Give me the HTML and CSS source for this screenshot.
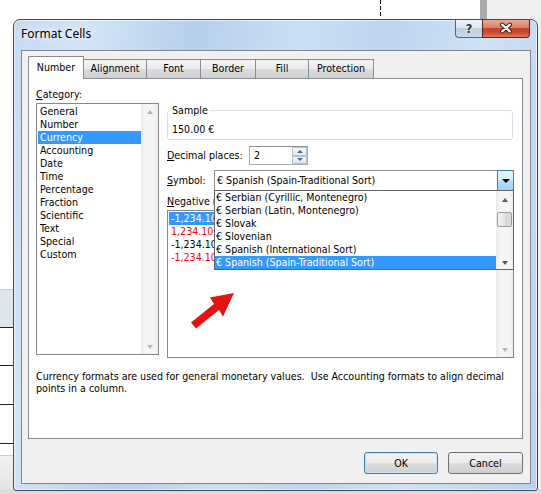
FILE: index.html
```
<!DOCTYPE html>
<html>
<head>
<meta charset="utf-8">
<title>Format Cells</title>
<link rel="stylesheet" href="styles.css">
</head>
<body>
<div class="sheet-left">
  <div class="s-white"></div>
  <div class="s-band"></div>
  <div class="s-row s-row-a"></div>
  <div class="s-row s-row-b"></div>
  <div class="s-row s-row-b"></div>
  <div class="s-gap"></div>
  <div class="s-foot"></div>
</div>
<div class="top-dash"></div>
<div class="top-bar"></div>
<div class="top-gray"></div>
<div class="right-strip"></div>
<div class="bottom-strip"></div>

<div class="win">
  <div class="titlebar">
    <span class="title">Format Cells</span>
    <div class="caps">
      <div class="cap cap-help"><span>?</span></div>
      <div class="cap cap-close">
        <svg width="47" height="17" viewBox="0 0 47 17">
          <path d="M19.5 4.5 L27.5 11.5 M27.5 4.5 L19.5 11.5" stroke="#4a1a10" stroke-width="4.2" stroke-linecap="round" fill="none"/>
          <path d="M19.5 4.5 L27.5 11.5 M27.5 4.5 L19.5 11.5" stroke="#ffffff" stroke-width="2.2" stroke-linecap="round" fill="none"/>
        </svg>
      </div>
    </div>
  </div>
  <div class="client">
    <div class="tabs">
      <div class="tab tab-sel w-number">Number</div>
      <div class="tab w-align">Alignment</div>
      <div class="tab w-font">Font</div>
      <div class="tab w-border">Border</div>
      <div class="tab w-fill">Fill</div>
      <div class="tab w-prot">Protection</div>
    </div>
    <div class="panel">
      <div class="col-left">
        <div class="lbl"><u>C</u>ategory:</div>
        <div class="listbox cat">
          <div class="items">
            <div class="item">General</div>
            <div class="item">Number</div>
            <div class="item sel">Currency</div>
            <div class="item">Accounting</div>
            <div class="item">Date</div>
            <div class="item">Time</div>
            <div class="item">Percentage</div>
            <div class="item">Fraction</div>
            <div class="item">Scientific</div>
            <div class="item">Text</div>
            <div class="item">Special</div>
            <div class="item">Custom</div>
          </div>
          <div class="vscroll"><span class="arr up light"></span><span class="arr down light"></span></div>
        </div>
      </div>
      <div class="col-right">
        <div class="group">
          <span class="group-lbl">Sample</span>
          <div class="sample">150.00 €</div>
        </div>
        <div class="row dec">
          <span class="lbl w-dec"><u>D</u>ecimal places:</span>
          <div class="spin">
            <span class="spin-val">2</span>
            <div class="spin-btns">
              <div class="sb"><span class="tri tri-up"></span></div>
              <div class="sb"><span class="tri tri-down"></span></div>
            </div>
          </div>
        </div>
        <div class="row sym">
          <span class="lbl w-sym"><u>S</u>ymbol:</span>
          <div class="combo">
            <span class="combo-val">€ Spanish (Spain-Traditional Sort)</span>
            <div class="combo-btn"><span class="tri-black"></span></div>
          </div>
        </div>
        <div class="lbl neg-lbl"><u>N</u>egative numbers:</div>
        <div class="listbox neg">
          <div class="items">
            <div class="item sel">-1,234.10 €</div>
            <div class="item red">1,234.10 €</div>
            <div class="item">-1,234.10 €</div>
            <div class="item red">-1,234.10 €</div>
          </div>
          <div class="vscroll"><span class="arr up light"></span><span class="arr down light"></span></div>
        </div>
      </div>
      <p class="desc">Currency formats are used for general monetary values.&nbsp; Use Accounting formats to align decimal<br>points in a column.</p>

      <div class="dropdown">
        <div class="items">
          <div class="item">€ Serbian (Cyrillic, Montenegro)</div>
          <div class="item">€ Serbian (Latin, Montenegro)</div>
          <div class="item">€ Slovak</div>
          <div class="item">€ Slovenian</div>
          <div class="item">€ Spanish (International Sort)</div>
          <div class="item sel">€ Spanish (Spain-Traditional Sort)</div>
        </div>
        <div class="vscroll dd-scroll">
          <span class="arr up"></span>
          <span class="thumb"></span>
          <span class="spacer"></span>
          <span class="arr down"></span>
        </div>
      </div>

      <svg class="arrow" width="60" height="50" viewBox="0 0 60 50">
        <polygon points="11,37.4 34,18.9 30,12.6 54,8 43,31.4 39,25.1 16,43.6" fill="#e41212"/>
      </svg>
    </div>
    <div class="btnrow">
      <button class="btn btn-ok">OK</button>
      <button class="btn btn-cancel">Cancel</button>
    </div>
  </div>
</div>
</body>
</html>
```

FILE: styles.css
```
* { box-sizing: border-box; }
html, body { margin: 0; padding: 0; }
body {
  width: 541px;
  height: 494px;
  overflow: hidden;
  position: relative;
  background: #ffffff;
  font-family: "DejaVu Sans Condensed", "DejaVu Sans", sans-serif;
  font-size: 10.6px;
  color: #000;
}
u { text-decoration: underline; text-underline-offset: 1px; }

/* background: spreadsheet behind the dialog */
.sheet-left {
  position: absolute;
  left: 0; top: 0;
  width: 14px; height: 494px;
  display: flex; flex-direction: column;
}
.s-white { height: 289px; background: #fff; }
.s-band { height: 39px; background: #dde5ed; border-top: 1px solid #c5ced8; border-bottom: 1px solid #202020; }
.s-row { border-bottom: 1px solid #202020; }
.s-row-a { height: 38px; }
.s-row-b { height: 39px; }
.s-gap { height: 11px; }
.s-foot { flex: 1; background: linear-gradient(#f2f2f2, #e2e2e2); border-top: 1px solid #cfcfcf; }
.top-dash {
  position: absolute; left: 380px; top: 0;
  width: 1px; height: 18px;
  background: repeating-linear-gradient(to bottom, #000 0 4px, transparent 4px 6px);
}
.top-bar { position: absolute; left: 480px; top: 0; width: 7px; height: 20px; background: #a8a8a8; }
.top-gray { position: absolute; left: 487px; top: 0; width: 54px; height: 20px; background: #f0f0f0; }
.right-strip { position: absolute; left: 536px; top: 18px; width: 5px; height: 476px; background: #eeeeee; }
.bottom-strip { position: absolute; left: 0; top: 489px; width: 541px; height: 5px; background: #dcdcdc; }

/* window */
.win {
  position: absolute;
  left: 13px; top: 19px;
  width: 525px; height: 472px;
  border: 1px solid #3e4c5e;
  border-radius: 7px 7px 3px 3px;
  background: linear-gradient(100deg, #c5daf2 0%, #d3e4f6 12%, #b7cfeb 30%, #cbdff4 48%, #bed5ef 62%, #cee1f5 78%, #bad2ee 100%);
  box-shadow: inset 0 0 0 1px rgba(255,255,255,0.55);
  padding: 0 6px 6px 7px;
}
.titlebar { height: 30px; display: flex; align-items: flex-start; }
.title {
  margin-top: 6px;
  font-family: "Noto Sans", "DejaVu Sans", sans-serif;
  font-size: 12px;
  line-height: 16px;
  color: #000;
  text-shadow: 0 0 6px #fff, 0 0 10px #fff;
}
.caps { margin-left: auto; margin-right: 1px; display: flex; }
.cap { height: 18px; display: flex; align-items: center; justify-content: center; }
.cap-help {
  width: 27px;
  border: 1px solid #56667a; border-top: none; border-right: none;
  border-radius: 0 0 0 4px;
  background: linear-gradient(#eef3f9 0%, #dfe7f1 45%, #c2cedd 50%, #ccd7e5 100%);
}
.cap-help span {
  font-family: "DejaVu Sans", sans-serif;
  font-weight: bold;
  font-size: 12px;
  line-height: 14px;
  color: #2c3642;
  text-shadow: 0 0 1px #fff, 0 0 2px #fff;
}
.cap-close {
  width: 48px;
  border: 1px solid #5b2216; border-top: none;
  border-radius: 0 0 4px 0;
  background: linear-gradient(#eaa898 0%, #da7f69 45%, #c4432a 50%, #cc4c2f 75%, #e27b5f 100%);
}

.client {
  width: 510px; height: 434px;
  border: 1px solid #7b8898;
  background: #f0f0f0;
  padding: 5px 7px 0 6px;
}

/* tabs */
.tabs { display: flex; align-items: flex-end; height: 22px; }
.tab {
  height: 19px;
  border: 1px solid #898c95; border-bottom: none;
  background: linear-gradient(#f3f3f3 0%, #ebebeb 50%, #dddddd 50%, #cfcfcf 100%);
  text-align: center;
  line-height: 17px;
  margin-left: -1px;
  white-space: nowrap;
}
.tab-sel {
  height: 23px;
  margin-left: 0;
  margin-bottom: -1px;
  background: #ffffff;
  position: relative; z-index: 1;
  line-height: 20px;
}
.w-number { width: 56px; }
.w-align { width: 64px; }
.w-font { width: 55px; }
.w-border { width: 56px; }
.w-fill { width: 54px; }
.w-prot { width: 66px; }

.panel {
  position: relative;
  width: 495px; height: 361px;
  border: 1px solid #898c95;
  background: #ffffff;
  padding: 9px 8px 0 7px;
  display: grid;
  grid-template-columns: 123px 347px;
  column-gap: 8px;
  align-content: start;
  align-items: start;
}
.lbl { line-height: 13px; height: 13px; white-space: nowrap; }

.listbox {
  border: 1px solid #828790;
  background: #fff;
  display: flex;
  margin-top: 2px;
}
.listbox.cat { width: 123px; height: 252px; }
.listbox.neg { width: 347px; height: 148px; }
.items { flex: 1; padding: 1px 0 0 1px; min-width: 0; }
.item { height: 13px; line-height: 13px; padding-left: 2px; white-space: nowrap; overflow: hidden; }
.item.sel { background: #3399ff; color: #fff; }
.item.red { color: #ff0000; }

.vscroll {
  width: 17px;
  background: linear-gradient(to right, #e9e9e9, #f5f5f5 25%, #f5f5f5 75%, #ededed);
  display: flex; flex-direction: column; align-items: center; justify-content: space-between;
  padding: 6px 0 5px;
}
.arr { width: 0; height: 0; border-left: 3.5px solid transparent; border-right: 3.5px solid transparent; }
.arr.up { border-bottom: 4px solid #505a66; }
.arr.down { border-top: 4px solid #505a66; }
.arr.up.light { border-bottom-color: #b4b4b4; }
.arr.down.light { border-top-color: #b4b4b4; }

/* right column */
.group {
  position: relative;
  margin-top: 22px;
  width: 346px; height: 30px;
  border: 1px solid #d5dfe5;
  border-radius: 3px;
}
.group-lbl {
  position: absolute; left: 2px; top: -7px;
  background: #fff; padding: 0 2px;
  line-height: 13px;
}
.sample { margin-top: 12px; padding-left: 4px; line-height: 13px; }

.row { display: flex; align-items: center; }
.dec { margin-top: 6px; height: 19px; }
.w-dec { width: 82px; }
.spin {
  width: 59px; height: 19px;
  border: 1px solid #abadb3;
  border-top-color: #8e9097;
  background: #fff;
  display: flex;
}
.spin-val { flex: 1; padding-left: 4px; line-height: 17px; }
.spin-btns { width: 15px; display: flex; flex-direction: column; }
.sb {
  flex: 1;
  border: 1px solid #b8c4d2;
  background: linear-gradient(#f4f7fb, #dde6f0);
  display: flex; align-items: center; justify-content: center;
}
.tri { width: 0; height: 0; border-left: 3px solid transparent; border-right: 3px solid transparent; }
.tri-up { border-bottom: 3px solid #4e6488; }
.tri-down { border-top: 3px solid #4e6488; }

.sym { margin-top: 5px; height: 21px; }
.w-sym { width: 47px; }
.combo {
  width: 300px; height: 21px;
  border: 1px solid #8e8f8f;
  background: #fff;
  display: flex;
}
.combo-val { flex: 1; padding-left: 2px; line-height: 19px; white-space: nowrap; }
.combo-btn {
  width: 17px; height: 21px;
  margin: -1px -1px -1px 0;
  border: 1px solid #3c7fb1;
  border-radius: 0 2px 2px 0;
  background: linear-gradient(#e5f4fc 0%, #d4edfb 50%, #b5dffa 50%, #9fd3f3 100%);
  display: flex; align-items: center; justify-content: center;
}
.tri-black { width: 0; height: 0; border-left: 4px solid transparent; border-right: 4px solid transparent; border-top: 4px solid #000; }

.neg-lbl { margin-top: 4px; }

.desc {
  grid-column: 1 / -1;
  margin: 12px 0 0;
  line-height: 12px;
  white-space: nowrap;
}

/* open dropdown list */
.dropdown {
  position: absolute;
  left: 185px; top: 111px;
  width: 300px; height: 80px;
  border: 1px solid #646464;
  background: #fff;
  display: flex;
  z-index: 2;
}
.dropdown .items { padding: 0; }
.dropdown .item { padding-left: 1px; }
.dd-scroll { padding: 7px 0 4px; justify-content: flex-start; }
.thumb {
  margin-top: 10px;
  width: 15px; height: 15px;
  border: 1px solid #9a9a9a;
  border-radius: 2px;
  background: linear-gradient(to right, #f2f2f2, #e4e4e4 50%, #d6d6d6 51%, #dcdcdc);
}
.spacer { flex: 1; }

.arrow { position: absolute; left: 151px; top: 206px; z-index: 3; }

/* buttons */
.btnrow { display: flex; justify-content: flex-end; gap: 10px; margin-top: 13px; }
.btn {
  width: 75px; height: 22px;
  border: 1px solid #707070;
  border-radius: 3px;
  background: linear-gradient(#f2f2f2 0%, #ebebeb 50%, #dddddd 50%, #cfcfcf 100%);
  font: inherit;
  color: #000;
  padding: 0;
}
.btn-ok {
  width: 74px;
  border-color: #3c7fb1;
  box-shadow: inset 0 0 0 1px #c2e6f8;
}
```
